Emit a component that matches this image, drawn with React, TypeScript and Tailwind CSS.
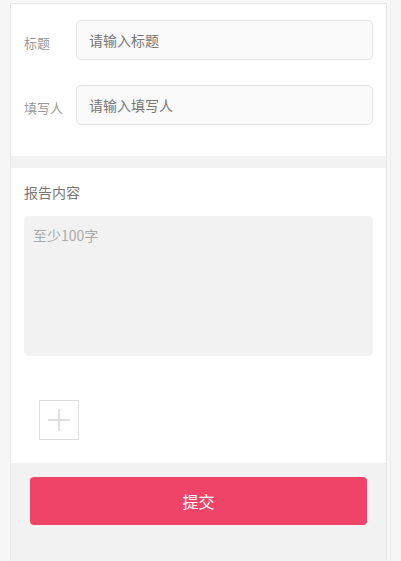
import React from "react";

export default function App() {
  const font = { fontFamily: '"Noto Sans CJK SC", "Liberation Sans", sans-serif' };
  return (
    <div className="w-[401px] h-[561px] bg-[#f7f7f7] overflow-hidden" style={font}>
      <div className="w-[391px] h-full border-r border-[#ececec] pl-[10px] pt-[3px]">
        <div className="w-[377px] h-full border-x border-t border-[#e6e6e6] bg-[#f2f2f2] flex flex-col">
          <div className="bg-white pt-[16px] pb-[31px] px-[13px] flex flex-col gap-[25px]">
            <div className="flex items-center">
              <div className="w-[52px] text-[13px] text-[#999] pt-[6px]">标题</div>
              <div className="flex-1 h-[40px] border border-[#e4e4e4] rounded-[5px] bg-[#fafafa] flex items-center px-[12px] text-[14px] text-[#777]">
                请输入标题
              </div>
            </div>
            <div className="flex items-center">
              <div className="w-[52px] text-[13px] text-[#999] pt-[6px]">填写人</div>
              <div className="flex-1 h-[40px] border border-[#e4e4e4] rounded-[5px] bg-[#fafafa] flex items-center px-[12px] text-[14px] text-[#777]">
                请输入填写人
              </div>
            </div>
          </div>
          <div className="h-[12px] bg-[#f2f2f2]" />
          <div className="bg-white px-[13px] pt-[14px] pb-[23px]">
            <div className="text-[14px] text-[#777] leading-[20px]">报告内容</div>
            <div className="mt-[14px] h-[140px] rounded-[5px] bg-[#f2f2f2] px-[9px] pt-[9px] text-[14px] text-[#aaa] leading-[20px]">
              至少100字
            </div>
            <div className="mt-[44px] ml-[15px] w-[40px] h-[40px] border border-[#ddd] flex items-center justify-center">
              <svg width="22" height="22" viewBox="0 0 22 22">
                <line x1="11" y1="0" x2="11" y2="22" stroke="#d6d6d6" strokeWidth="1.5" />
                <line x1="0" y1="11" x2="22" y2="11" stroke="#d6d6d6" strokeWidth="1.5" />
              </svg>
            </div>
          </div>
          <div className="px-[19px] pt-[14px]">
            <button className="w-[337px] h-[48px] rounded-[4px] bg-[#ef4468] text-white text-[16px]">
              提交
            </button>
          </div>
        </div>
      </div>
    </div>
  );
}
